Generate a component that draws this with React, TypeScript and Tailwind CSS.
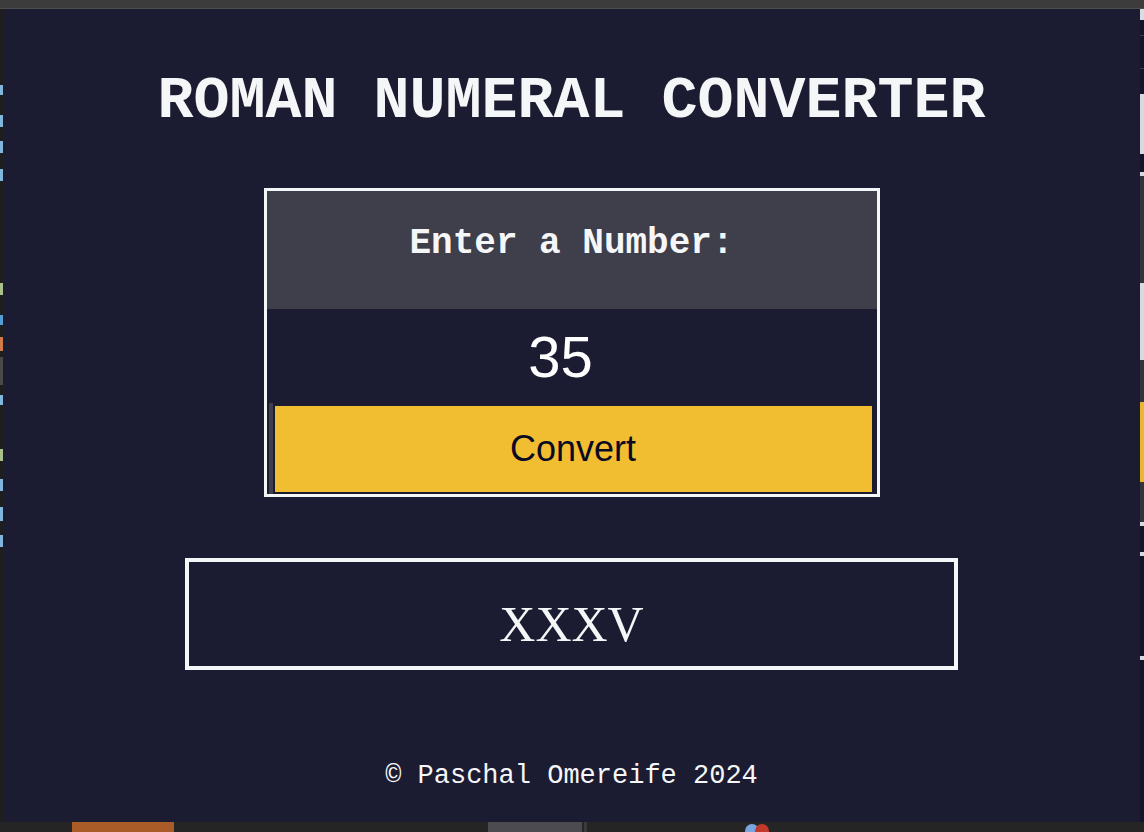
import React from "react";

const mono = { fontFamily: '"Liberation Mono", "Courier New", monospace' };

export default function App() {
  return (
    <div className="flex h-[832px] w-[1144px] flex-col overflow-hidden bg-[#1e1e1e]">
      <div className="h-[9px] shrink-0 border-b border-[#4f4f4f] bg-[#3c3c3c]" />
      <div className="flex min-h-0 flex-1">
        {/* left editor strip */}
        <div className="flex w-[3px] shrink-0 flex-col bg-[#1e1e1e]">
          <div className="mt-[76px] h-[10px] bg-[#7fb6dc]" />
          <div className="mt-[20px] h-[12px] bg-[#7fb6dc]" />
          <div className="mt-[14px] h-[12px] bg-[#7fb6dc]" />
          <div className="mt-[16px] h-[12px] bg-[#7fb6dc]" />
          <div className="mt-[102px] h-[12px] bg-[#a8c08a]" />
          <div className="mt-[20px] h-[10px] bg-[#569cd6]" />
          <div className="mt-[12px] h-[14px] bg-[#ce7b47]" />
          <div className="mt-[6px] h-[28px] bg-[#4a4a4a]" />
          <div className="mt-[10px] h-[10px] bg-[#7fb6dc]" />
          <div className="mt-[44px] h-[12px] bg-[#a8c08a]" />
          <div className="mt-[18px] h-[12px] bg-[#7fb6dc]" />
          <div className="mt-[16px] h-[14px] bg-[#7fb6dc]" />
          <div className="mt-[14px] h-[12px] bg-[#7fb6dc]" />
        </div>

        {/* main page */}
        <main className="flex min-w-0 flex-1 flex-col items-center bg-[#1b1b32] text-[#f5f6f7]">
          <h1
            style={mono}
            className="mt-[62px] text-[60px] font-bold leading-[60px] text-[#f5f6f7]"
          >
            ROMAN NUMERAL CONVERTER
          </h1>

          <div className="mt-[57px] flex w-[616px] flex-col border-[3px] border-[#f5f6f7] bg-[#1b1b32]">
            <div className="h-[118px] bg-[#3f3e4b] pt-[35px] text-center">
              <label
                style={mono}
                className="block text-[36px] font-bold leading-[36px] text-[#f5f6f7]"
              >
                Enter a Number:
              </label>
            </div>
            <input
              readOnly
              value="35"
              style={{ fontFamily: '"Liberation Sans", Arial, sans-serif' }}
              className="h-[94px] w-full bg-transparent pr-[22px] text-center text-[58px] leading-normal text-white outline-none"
            />
            <div className="flex h-[91px] pl-[2px] pr-[5px]">
              <div className="w-[4px] bg-[#3f3e4b]" />
              <button
                style={{ fontFamily: '"Liberation Sans", Arial, sans-serif' }}
                className="mb-[2px] ml-[2px] mt-[3px] flex-1 bg-[#f1be32] text-[36px] leading-none text-[#0a0a23]"
              >
                Convert
              </button>
            </div>
          </div>

          <div className="mt-[61px] h-[112px] w-[773px] border-4 border-[#f5f6f7] pt-[37px] text-center">
            <p
              style={{ fontFamily: '"Liberation Serif", "Times New Roman", serif' }}
              className="text-[50px] leading-[50px] text-[#f5f6f7]"
            >
              XXXV
            </p>
          </div>

          <footer
            style={mono}
            className="mt-[92px] text-[27px] leading-[28px] text-[#f5f6f7]"
          >
            © Paschal Omereife 2024
          </footer>
        </main>

        {/* right strip */}
        <div className="flex w-[4px] shrink-0 flex-col bg-[#14142a]">
          <div className="h-[11px] bg-[#d8dce4]" />
          <div className="mt-[15px] h-[1px] bg-[#3a3a4a]" />
          <div className="mt-[32px] h-[1px] bg-[#3a3a4a]" />
          <div className="mt-[25px] h-[60px] bg-[#d6d9e0]" />
          <div className="mt-[18px] h-[4px] bg-[#d6d9e0]" />
          <div className="h-[107px] bg-[#33333d]" />
          <div className="h-[77px] bg-[#d6d9e0]" />
          <div className="h-[42px] bg-[#33333d]" />
          <div className="h-[80px] bg-[#e8b830]" />
          <div className="h-[40px] bg-[#33333d]" />
          <div className="h-[4px] bg-[#d6d9e0]" />
          <div className="mt-[26px] h-[4px] bg-[#d6d9e0]" />
          <div className="mt-[100px] h-[4px] bg-[#d6d9e0]" />
        </div>
      </div>

      {/* bottom taskbar */}
      <div className="flex h-[10px] shrink-0 items-stretch bg-[#252526]">
        <div className="ml-[72px] w-[102px] bg-[#a95c28]" />
        <div className="ml-[314px] w-[94px] bg-[#4b4b50]" />
        <div className="ml-[2px] w-[3px] bg-[#3a3a3e]" />
        <div className="relative ml-[158px] w-[40px]">
          <div className="absolute left-0 top-[2px] h-[14px] w-[14px] rounded-full bg-[#7aa6e0]" />
          <div className="absolute left-[10px] top-[2px] h-[14px] w-[14px] rounded-full bg-[#c0392b]" />
        </div>
      </div>
    </div>
  );
}
